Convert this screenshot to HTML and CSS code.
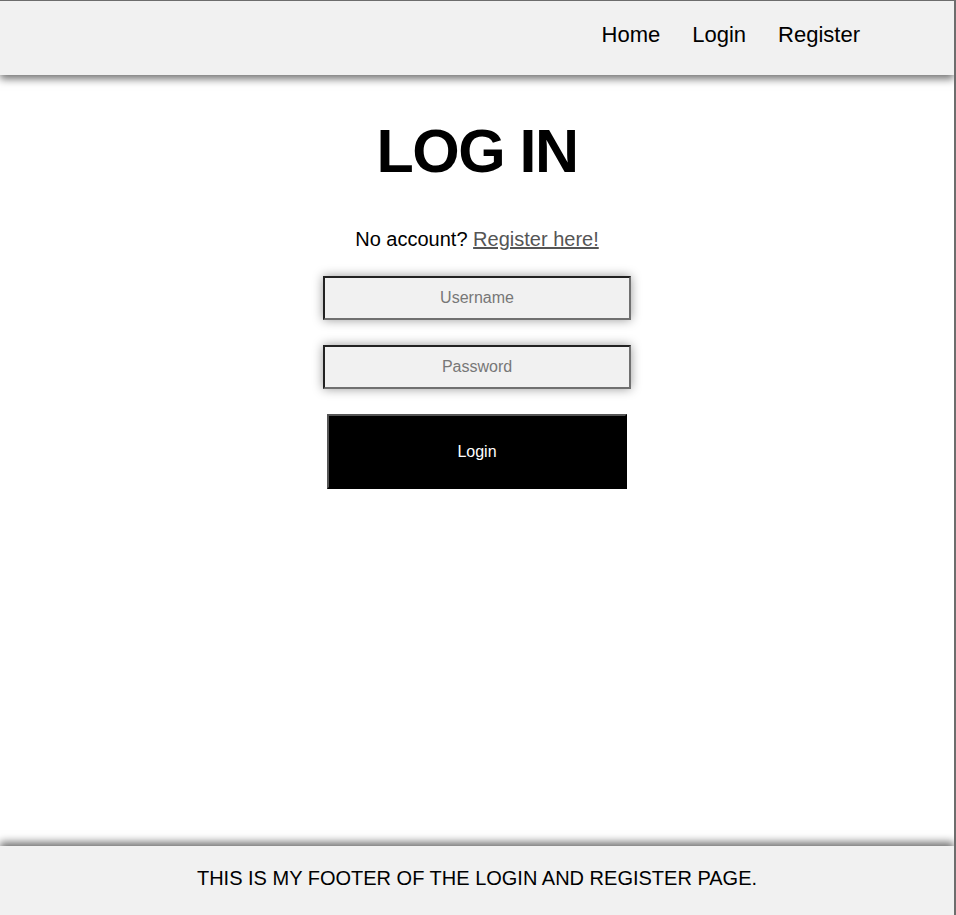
FILE: index.html
```html
<!DOCTYPE html>
<html lang="en">
<head>
<meta charset="utf-8">
<title>Log in</title>
<link rel="stylesheet" href="styles.css">
</head>
<body>
<div class="page">
  <header class="site-header">
    <nav class="nav">
      <a href="#">Home</a>
      <a href="#">Login</a>
      <a href="#">Register</a>
    </nav>
  </header>
  <main class="content">
    <h1 class="title">LOG IN</h1>
    <p class="hint">No account? <a href="#">Register here!</a></p>
    <form class="form">
      <input class="field" type="text" placeholder="Username">
      <input class="field" type="password" placeholder="Password">
      <button class="submit" type="button">Login</button>
    </form>
  </main>
  <footer class="site-footer">THIS IS MY FOOTER OF THE LOGIN AND REGISTER PAGE.</footer>
</div>
</body>
</html>
```
FILE: styles.css
```css
html, body {
  margin: 0;
  padding: 0;
  background: #fff;
  font-family: "Liberation Sans", Arial, sans-serif;
}
.page {
  box-sizing: border-box;
  min-height: 915px;
  display: flex;
  flex-direction: column;
  border-top: 1px solid #6d6d6d;
  border-right: 2px solid #6d6d6d;
  overflow: hidden;
}
.site-header {
  height: 74px;
  background: #f1f1f1;
  box-shadow: 0 4px 8px rgba(0, 0, 0, 0.55);
  display: flex;
  justify-content: flex-end;
  align-items: center;
  padding-right: 94px;
  position: relative;
  z-index: 1;
}
.nav {
  display: flex;
  gap: 32px;
  margin-top: -6px;
}
.nav a {
  color: #000;
  text-decoration: none;
  font-size: 22px;
}
.content {
  flex: 1;
  display: flex;
  flex-direction: column;
  align-items: center;
}
.title {
  margin: 40px 0 0;
  font-size: 61px;
  font-weight: bold;
  letter-spacing: -1.5px;
  line-height: 72px;
  color: #000;
}
.hint {
  margin: 40px 0 0;
  font-size: 20px;
  line-height: 24px;
  color: #000;
}
.hint a {
  color: #555;
}
.form {
  margin-top: 25px;
  display: flex;
  flex-direction: column;
  align-items: center;
}
.field {
  box-sizing: border-box;
  width: 308px;
  height: 44px;
  margin-bottom: 25px;
  border: 2px solid;
  border-color: #222 #707070 #707070 #222;
  background: #f1f1f1;
  box-shadow: 0 0 10px rgba(0, 0, 0, 0.4);
  text-align: center;
  font-family: "Liberation Sans", Arial, sans-serif;
  font-size: 16px;
  outline: none;
}
.field::placeholder {
  color: #777;
}
.submit {
  box-sizing: border-box;
  width: 300px;
  height: 75px;
  margin-top: 0;
  border: 2px solid;
  border-color: #555 #000 #000 #555;
  background: #000;
  color: #fff;
  font-family: "Liberation Sans", Arial, sans-serif;
  font-size: 16px;
}
.site-footer {
  box-sizing: border-box;
  height: 69px;
  padding-bottom: 4px;
  background: #f1f1f1;
  box-shadow: 0 -4px 8px rgba(0, 0, 0, 0.55);
  display: flex;
  align-items: center;
  justify-content: center;
  font-size: 20px;
  color: #000;
  position: relative;
}
```
